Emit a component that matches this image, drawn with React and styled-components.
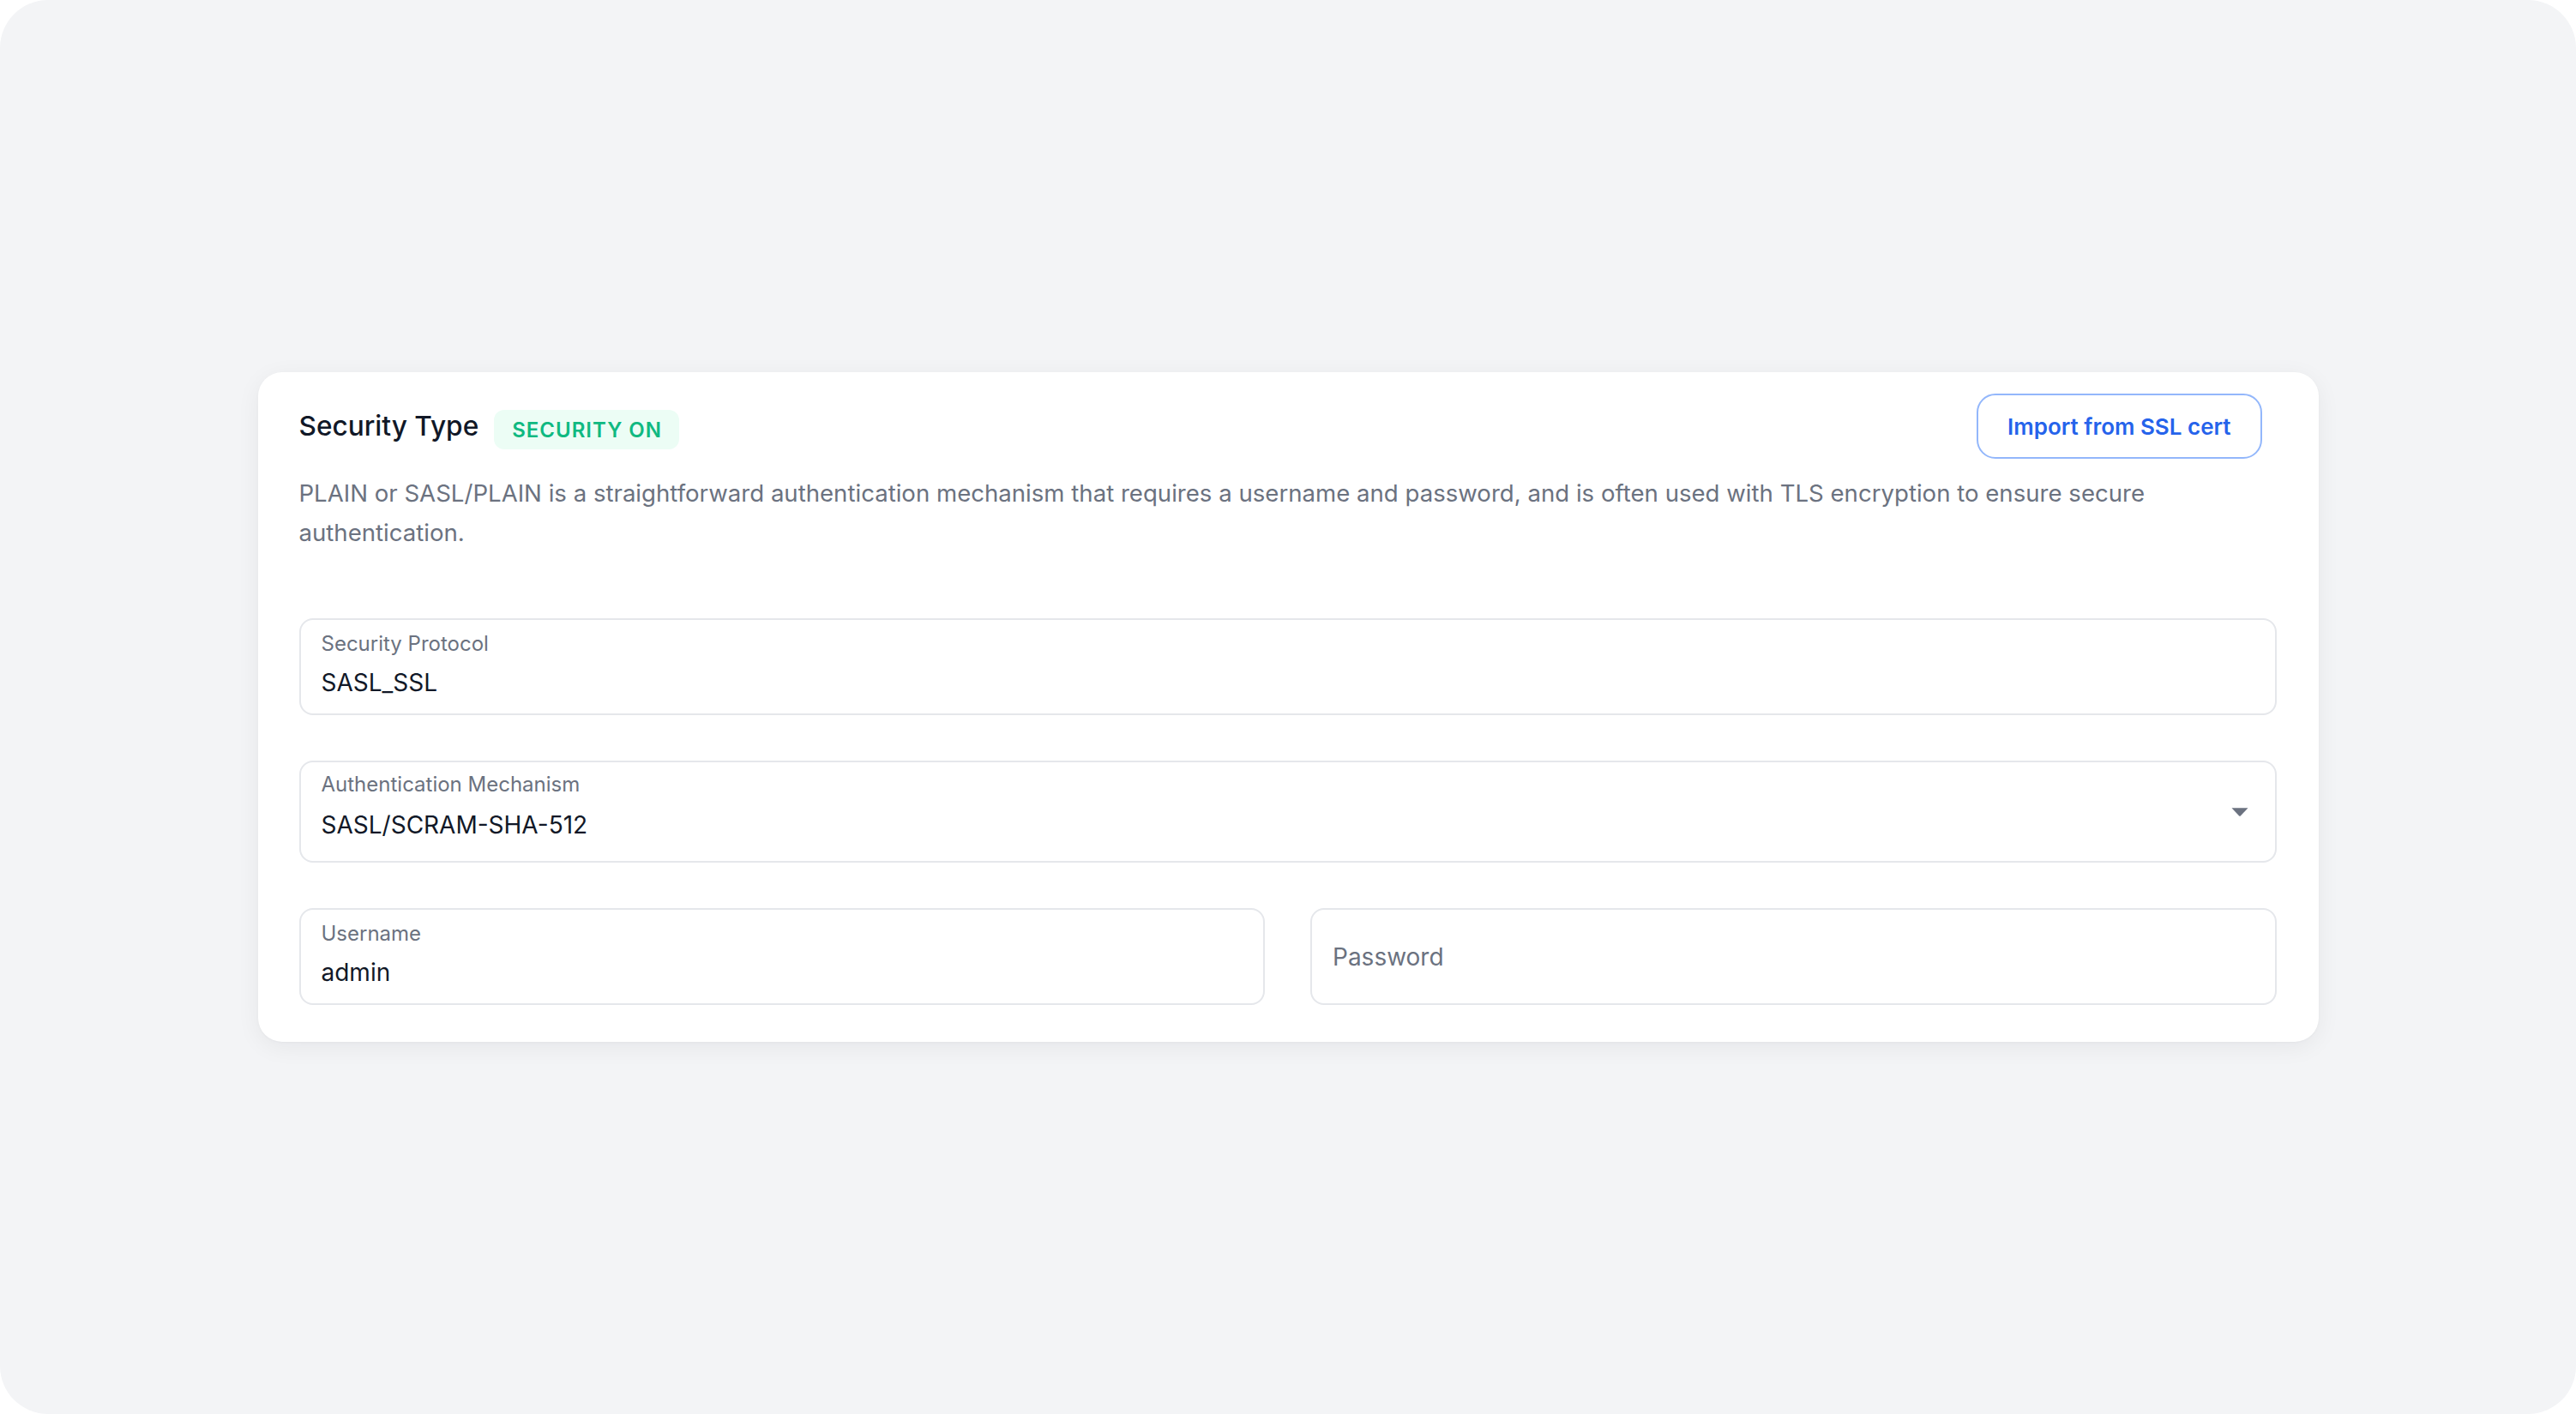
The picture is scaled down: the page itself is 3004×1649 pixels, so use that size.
import React from "react";
import styled, { createGlobalStyle } from "styled-components";

const GlobalStyle = createGlobalStyle`
  html, body {
    margin: 0;
    padding: 0;
    background: #ffffff;
  }
  body {
    font-family: Inter, "Noto Sans", "Liberation Sans", sans-serif;
    -webkit-font-smoothing: antialiased;
  }
  * { box-sizing: border-box; }
`;

const Page = styled.main`
  width: 100vw;
  height: 100vh;
  background: #f3f4f6;
  border-radius: 56px;
  display: flex;
  align-items: center;
  justify-content: center;
`;

const Card = styled.section`
  width: 2403px;
  background: #ffffff;
  border-radius: 28px;
  padding: 25px 49px 43px 48px;
  box-shadow: 0 6px 28px rgba(17, 24, 39, 0.06), 0 1px 3px rgba(17, 24, 39, 0.03);
`;

const Header = styled.header`
  display: flex;
  align-items: center;
  justify-content: space-between;
  height: 76px;
`;

const TitleGroup = styled.div`
  display: flex;
  align-items: center;
  gap: 18px;
`;

const Title = styled.h2`
  margin: 0;
  font-size: 31.6px;
  line-height: 40px;
  font-weight: 500;
  color: #111827;
`;

const Badge = styled.span`
  display: inline-flex;
  align-items: center;
  height: 46px;
  padding: 0 20px 0 21px;
  margin-top: 8px;
  border-radius: 12px;
  background: #ecfdf5;
  color: #10b981;
  font-size: 24px;
  font-weight: 600;
  letter-spacing: 1px;
`;

const OutlineButton = styled.button`
  height: 76px;
  padding: 0 34px;
  margin-right: 17px;
  border: 2px solid #93b7fb;
  border-radius: 22px;
  background: #ffffff;
  color: #2563eb;
  font-family: inherit;
  font-size: 26px;
  font-weight: 600;
  cursor: pointer;
`;

const Description = styled.p`
  margin: 17px 0 0;
  font-size: 27.6px;
  line-height: 46px;
  color: #6b7280;
`;

const Fields = styled.div`
  margin-top: 77px;
  display: flex;
  flex-direction: column;
  gap: 53px;
`;

const Row = styled.div`
  display: grid;
  grid-template-columns: 1fr 1fr;
  gap: 53px;
`;

const FieldBox = styled.div`
  height: ${(p) => (p.$tall ? 119 : 113)}px;
  border: 2px solid #e5e7eb;
  border-radius: 16px;
  background: #ffffff;
  padding: 0 30px 0 24px;
  display: flex;
  align-items: ${(p) => (p.$center ? "center" : "flex-start")};
  gap: 16px;
`;

const FieldBody = styled.div`
  flex: 1;
  display: flex;
  flex-direction: column;
  padding-top: ${(p) => (p.$tall ? 10 : 12)}px;
`;

const Label = styled.div`
  font-size: 24px;
  line-height: 32px;
  color: #6b7280;
`;

const Value = styled.div`
  margin-top: ${(p) => (p.$select ? 13 : 11)}px;
  font-size: 28px;
  line-height: 36px;
  color: #111827;
`;

const Placeholder = styled.div`
  font-size: 28px;
  line-height: 36px;
  color: #6b7280;
`;

const Caret = styled.svg`
  align-self: center;
  width: 22px;
  height: 12px;
  flex: none;
`;

function TextField({ label, value }) {
  return (
    <FieldBox>
      <FieldBody>
        <Label>{label}</Label>
        <Value>{value}</Value>
      </FieldBody>
    </FieldBox>
  );
}

function SelectField({ label, value }) {
  return (
    <FieldBox $tall>
      <FieldBody $tall>
        <Label>{label}</Label>
        <Value $select>{value}</Value>
      </FieldBody>
      <Caret viewBox="0 0 22 12" aria-hidden="true">
        <path d="M1.5 1.2 H20.5 L11.8 10.4 Q11 11.2 10.2 10.4 Z" fill="#6b7280" />
      </Caret>
    </FieldBox>
  );
}

function EmptyField({ placeholder }) {
  return (
    <FieldBox $center>
      <Placeholder>{placeholder}</Placeholder>
    </FieldBox>
  );
}

export default function App() {
  return (
    <>
      <GlobalStyle />
      <Page>
        <Card>
          <Header>
            <TitleGroup>
              <Title>Security Type</Title>
              <Badge>SECURITY ON</Badge>
            </TitleGroup>
            <OutlineButton type="button">Import from SSL cert</OutlineButton>
          </Header>
          <Description>
            PLAIN or SASL/PLAIN is a straightforward authentication mechanism that requires a username and
            password, and is often used with TLS encryption to ensure secure authentication.
          </Description>
          <Fields>
            <TextField label="Security Protocol" value="SASL_SSL" />
            <SelectField label="Authentication Mechanism" value="SASL/SCRAM-SHA-512" />
            <Row>
              <TextField label="Username" value="admin" />
              <EmptyField placeholder="Password" />
            </Row>
          </Fields>
        </Card>
      </Page>
    </>
  );
}
